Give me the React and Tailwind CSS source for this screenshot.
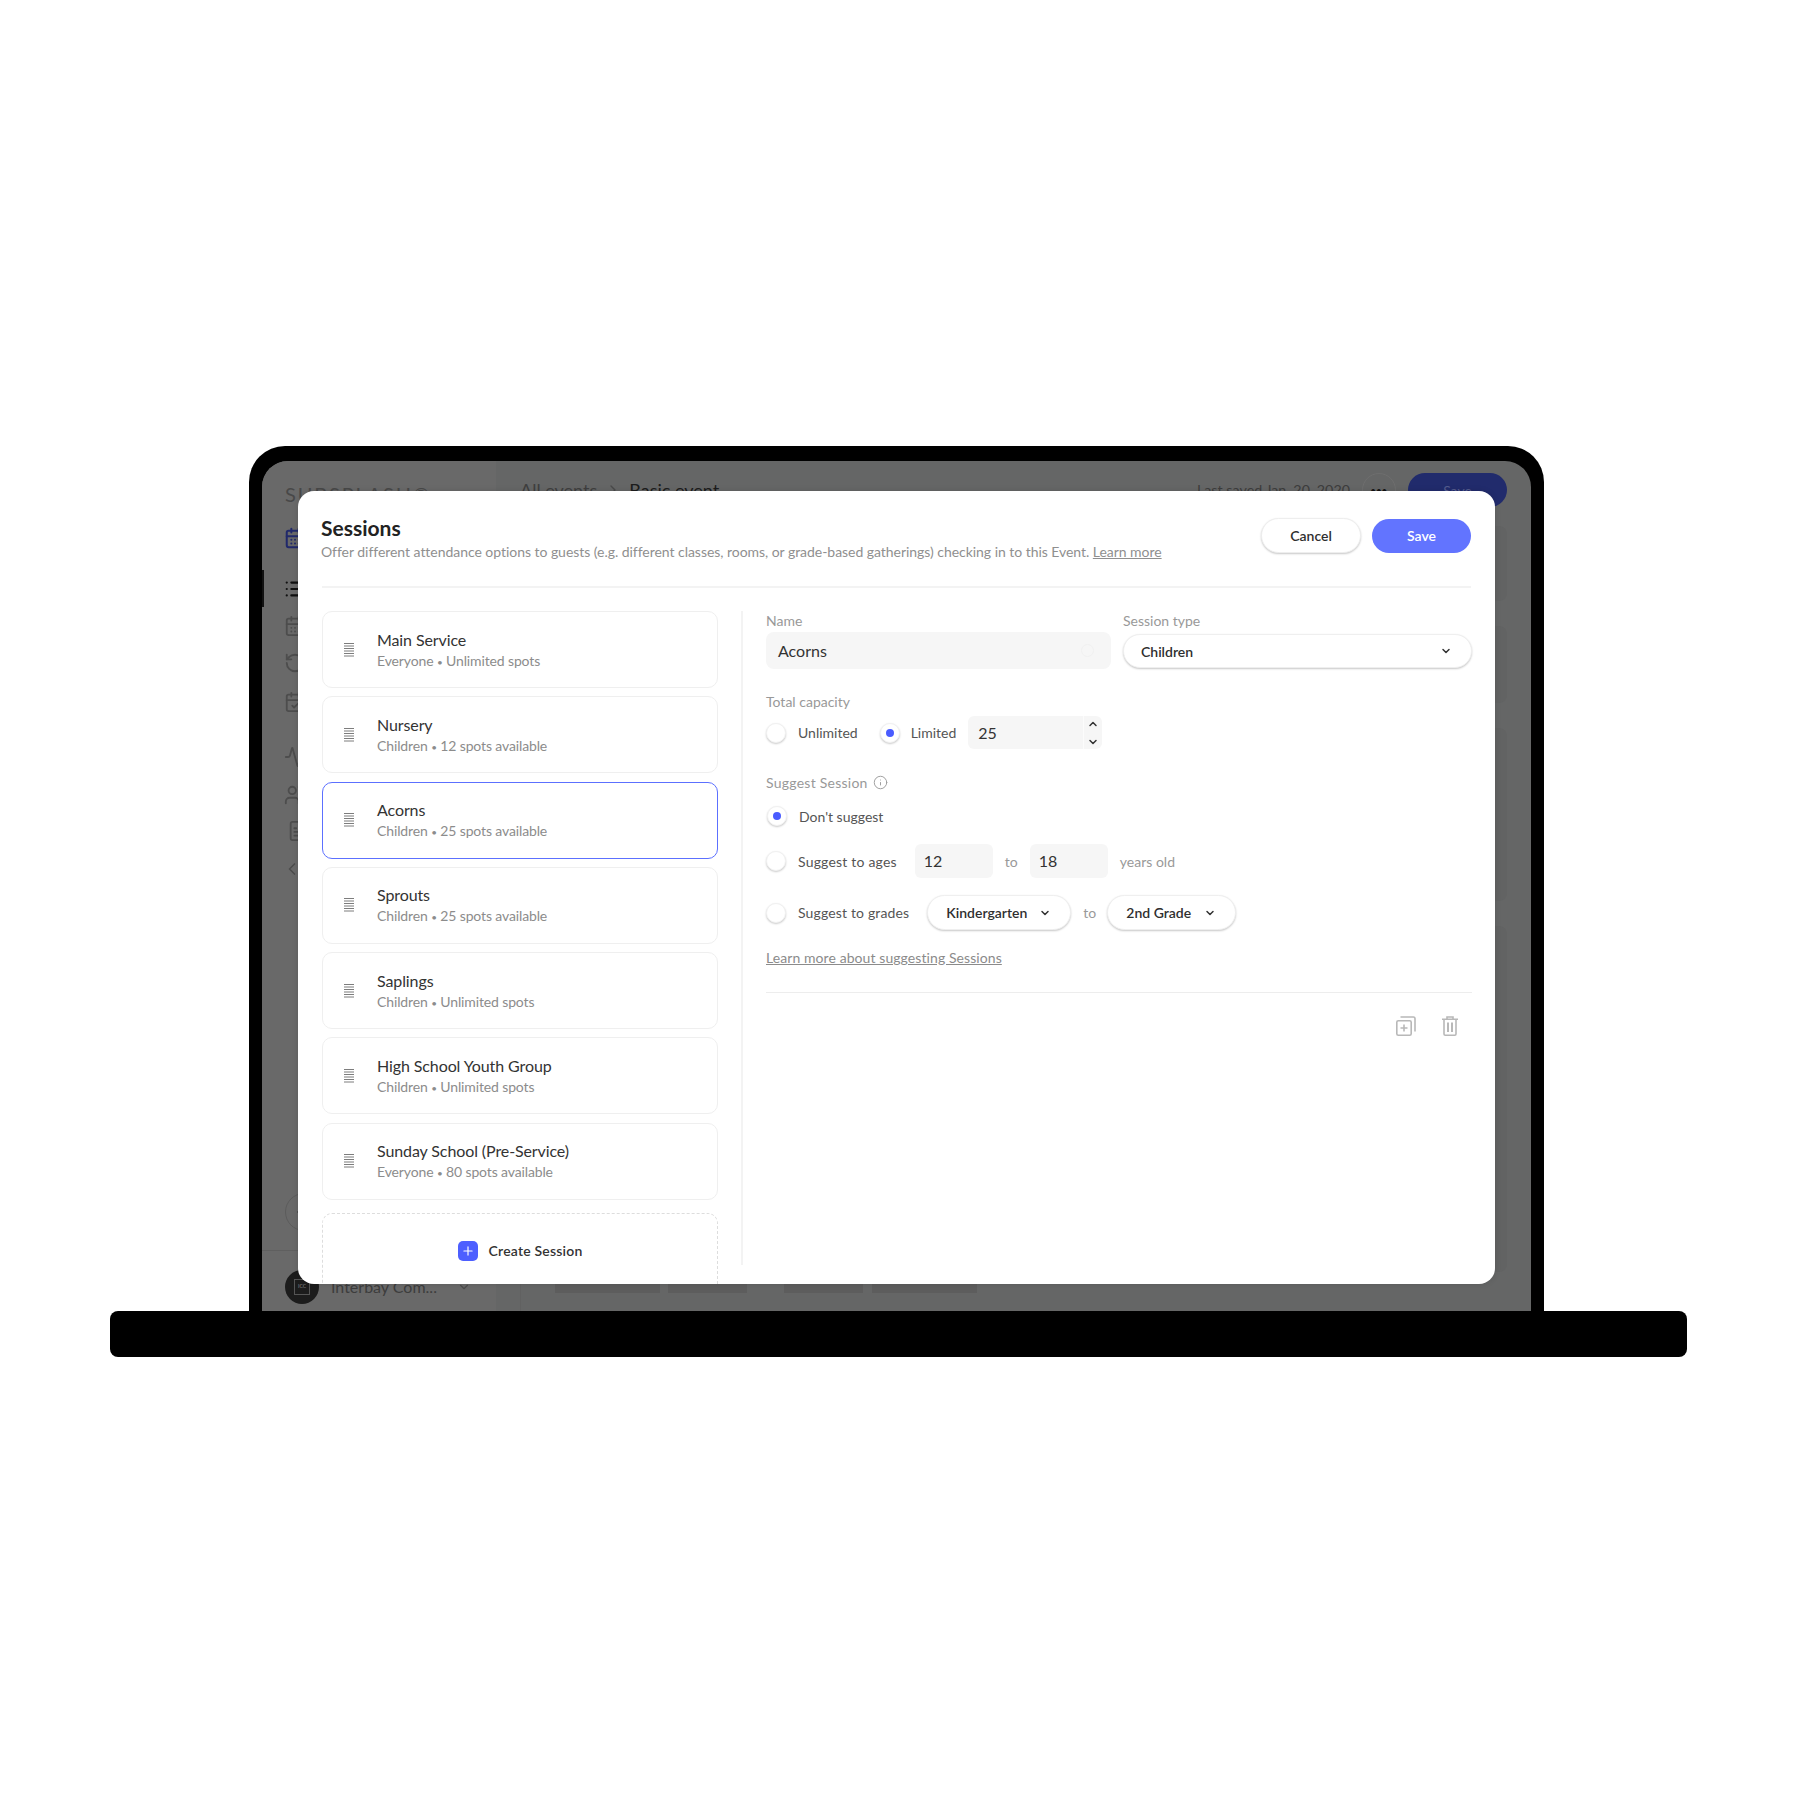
import React from "react";
import { CalendarDays, List, RotateCcw, CalendarCheck, Activity, Users, FileText, ChevronLeft, ChevronDown, ChevronUp, Plus, Info } from "lucide-react";

const sessions = [
  ["Main Service", "Everyone", "Unlimited spots"],
  ["Nursery", "Children", "12 spots available"],
  ["Acorns", "Children", "25 spots available", true],
  ["Sprouts", "Children", "25 spots available"],
  ["Saplings", "Children", "Unlimited spots"],
  ["High School Youth Group", "Children", "Unlimited spots"],
  ["Sunday School (Pre-Service)", "Everyone", "80 spots available"],
];

function Handle() {
  return (
    <svg width="10" height="14" viewBox="0 0 10 14" className="shrink-0" stroke="#7d7d7d" strokeWidth="1">
      <path d="M0 .5h10M0 3h10M0 5.5h10M0 8h10M0 10.500h10M0 13h10" />
    </svg>
  );
}

function Radio({ on }) {
  return (
    <span className="flex h-5 w-5 shrink-0 items-center justify-center rounded-full border border-[#f1f1f1] bg-white shadow-[0_1px_2px_rgba(0,0,0,0.22)]">
      {on && <span className="h-2 w-2 rounded-full bg-[#4a5cff]" />}
    </span>
  );
}

function Pill({ className, label }) {
  return (
    <div className={`flex items-center justify-between rounded-full border border-[#efefef] bg-white shadow-[0_1px_2px_rgba(0,0,0,0.22)] ${className}`}>
      <span className="text-[14px] font-semibold text-[#2f2f2f]">{label}</span>
      <ChevronDown size={12} strokeWidth={3} color="#333" />
    </div>
  );
}

function Background() {
  return (
    <div className="flex h-full w-full bg-[#656666] text-[#444]">
      <div className="flex h-full w-[234px] shrink-0 flex-col bg-[#696969]">
        <div className="ml-[23px] mt-[21px] text-[20px] leading-6 tracking-[1.85px] text-[#484848]">SUBSPLASH®</div>
        <div className="relative mt-[11px] flex flex-col">
          <CalendarDays size={22} strokeWidth={2.2} color="#21296b" className="ml-[22px] mt-[10px]" />
          <div className="mt-[21px] flex items-center">
            <span className="h-[37px] w-[2px] bg-[#111]" />
            <List size={22} strokeWidth={2.4} color="#111" className="ml-[20px]" />
          </div>
          <CalendarDays size={22} strokeWidth={2} color="#4d4d4d" className="ml-[22px] mt-[8px]" />
          <RotateCcw size={22} strokeWidth={2} color="#4d4d4d" className="ml-[22px] mt-[15px]" />
          <CalendarCheck size={22} strokeWidth={2} color="#4d4d4d" className="ml-[22px] mt-[17px]" />
          <Activity size={22} strokeWidth={2} color="#4d4d4d" className="ml-[22px] mt-[33px]" />
          <Users size={22} strokeWidth={2} color="#4d4d4d" className="ml-[22px] mt-[16px]" />
          <FileText size={22} strokeWidth={2} color="#4d4d4d" className="ml-[25px] mt-[14px]" />
          <ChevronLeft size={20} strokeWidth={2} color="#4d4d4d" className="ml-[20px] mt-[17px]" />
        </div>
        <div className="mt-auto">
          <div className="ml-[23px] flex h-[38px] w-[38px] items-center justify-center rounded-full border border-[#5c5c5c] text-[#222]">
            <Plus size={20} strokeWidth={2} />
          </div>
          <div className="mt-[19px] h-px bg-[#5f5f5f]" />
          <div className="flex h-[60px] items-start pl-[23px] pt-[19px]">
            <div className="flex h-[34px] w-[34px] shrink-0 items-center justify-center rounded-full bg-[#1c1c1c]">
              <span className="flex h-4 w-4 items-center justify-center border border-[#555] text-[5px] text-[#888]">ICC</span>
            </div>
            <span className="ml-[12px] text-[16px] leading-[34px] text-[#3d3d3d]">Interbay Com...</span>
            <ChevronDown size={14} color="#4d4d4d" className="ml-[20px] mt-[10px]" />
          </div>
        </div>
      </div>
      <div className="flex min-w-0 flex-1 flex-col">
        <div className="flex h-[65px] shrink-0 items-start pt-[12px] pl-[24px] pr-[24px]">
          <span className="mt-[5px] text-[18px] leading-6 text-[#3f3f3f]">All events</span>
          <ChevronLeft size={16} color="#4a4a4a" className="mx-[8px] mt-[9px] rotate-180" />
          <span className="mt-[5px] text-[18px] leading-6 text-[#1c1c1c]">Basic event</span>
          <span className="ml-auto mt-[5px] text-[14.300px] leading-6 text-[#3d3d3d]">Last saved Jan. 20, 2020</span>
          <span className="ml-[12px] flex h-[34px] w-[34px] items-center justify-center rounded-full border border-[#6e6e6e] text-[#111]">
            <span className="text-[9px] font-bold leading-none tracking-[0.5px]">•••</span>
          </span>
          <span className="ml-[12px] flex h-[34px] w-[99px] items-center justify-center rounded-full bg-[#212b6c] text-[14px] text-[#555c8e]">Save</span>
        </div>
        <div className="flex min-h-0 flex-1 pr-[24px]">
          <div className="ml-[24px] mr-[20px] flex min-w-0 flex-1 flex-col justify-end border-l border-[#616161] pb-[18px] pl-[34px]">
            <div className="flex">
              <span className="h-[9px] w-[105px] bg-[#5d5d5d]" />
              <span className="ml-[8px] h-[9px] w-[79px] bg-[#5d5d5d]" />
              <span className="ml-[37px] h-[9px] w-[79px] bg-[#5d5d5d]" />
              <span className="ml-[9px] h-[9px] w-[105px] bg-[#5d5d5d]" />
            </div>
          </div>
          <div className="flex w-[307px] shrink-0 flex-col gap-[25px]">
            <span className="h-[75px] rounded-lg bg-[#626363]" />
            <span className="h-[77px] rounded-lg bg-[#626363]" />
            <span className="h-[173px] rounded-lg bg-[#626363]" />
            <span className="h-[346px] rounded-lg bg-[#626363]" />
          </div>
        </div>
      </div>
    </div>
  );
}

function Modal() {
  return (
    <div className="absolute left-[36px] top-[30px] flex h-[793px] w-[1197px] flex-col overflow-hidden rounded-[16px] bg-white px-6 text-[#333] shadow-[0_0_6px_rgba(0,0,0,0.12)]">
      <div className="flex h-[97px] shrink-0 items-start justify-between border-b-2 border-[#f3f3f3] pt-[25px]">
        <div className="-ml-px">
          <h1 className="text-[21px] font-bold leading-[24px] text-[#222]">Sessions</h1>
          <p className="mt-[3px] text-[14px] leading-[18px] tracking-[-0.04px] text-[#8f8f8f]">
            Offer different attendance options to guests (e.g. different classes, rooms, or grade-based gatherings) checking in to this Event. <span className="underline">Learn more</span>
          </p>
        </div>
        <div className="mt-[2px] flex items-center gap-[11px]">
          <button className="h-[35px] w-[100px] rounded-full border border-[#eeeeee] bg-white text-[14px] font-semibold text-[#2f2f2f] shadow-[0_1px_2px_rgba(0,0,0,0.22)]">Cancel</button>
          <button className="h-[34px] w-[99px] rounded-full bg-[#6274ff] text-[14px] font-semibold text-white">Save</button>
        </div>
      </div>
      <div className="mt-[23px] flex min-h-0 flex-1 items-start">
        <div className="flex w-[396px] shrink-0 flex-col gap-[8.300px]">
          {sessions.map(([title, who, spots, active]) => (
            <div key={title} className={`flex h-[77px] shrink-0 items-center rounded-[10px] border bg-white pl-[21px] ${active ? "border-[#5c70ff]" : "border-[#efefef]"}`}>
              <Handle />
              <div className="ml-[23px] pt-px">
                <div className="text-[16px] leading-[22px] tracking-[-0.1px] text-[#333]">{title}</div>
                <div className="text-[14px] leading-[20px] tracking-[-0.13px] text-[#8c8c8c]">
                  {who} <span className="text-[10px]">•</span> {spots}
                </div>
              </div>
            </div>
          ))}
          <div className="mt-[5px] flex h-[90px] shrink-0 items-start justify-center rounded-[10px] border border-dashed border-[#dddddd] pt-[27px]">
            <span className="flex h-5 w-5 items-center justify-center rounded-[5px] bg-[#4d5fff]">
              <Plus size={14} strokeWidth={2} color="#fff" />
            </span>
            <span className="ml-[11px] text-[14px] font-semibold leading-5 tracking-[0.2px] text-[#333]">Create Session</span>
          </div>
        </div>
        <div className="ml-[23px] h-[654px] w-[2px] shrink-0 bg-[#f3f3f3]" />
        <div className="ml-[23px] flex w-[706px] shrink-0 flex-col pt-px">
          <div className="flex gap-[12px]">
            <div className="w-[345px]">
              <div className="text-[14px] leading-[18px] text-[#999]">Name</div>
              <div className="mt-[2px] flex h-[37px] items-center justify-between rounded-[8px] bg-[#f6f6f6] pl-[12px] pr-[17px] text-[16px] text-[#333]">
                Acorns
                <span className="h-[13px] w-[13px] rounded-full border border-[#f1f1f1]" />
              </div>
            </div>
            <div className="flex-1">
              <div className="text-[14px] leading-[18px] text-[#999]">Session type</div>
              <Pill className="mt-[4px] h-[34px] pl-[17px] pr-[19px]" label="Children" />
            </div>
          </div>

          <div className="mt-[24px] text-[14px] leading-[18px] text-[#999]">Total capacity</div>
          <div className="mt-[5px] flex h-[33px] items-center">
            <Radio />
            <span className="ml-[12px] text-[14px] text-[#555]">Unlimited</span>
            <span className="ml-[22px]"><Radio on /></span>
            <span className="ml-[11px] text-[14px] text-[#555]">Limited</span>
            <div className="ml-[12px] flex h-[33px] w-[134px] items-center justify-between rounded-[6px] bg-[#f6f6f6] pl-[10px] text-[16px] text-[#333]">
              <span>25</span>
              <span className="flex h-full w-[19px] flex-col items-center justify-center gap-[6px] border-l border-[#fcfcfc]">
                <ChevronUp size={12} strokeWidth={3} color="#333" />
                <ChevronDown size={12} strokeWidth={3} color="#333" />
              </span>
            </div>
          </div>

          <div className="mt-[24px] flex h-[18px] items-center text-[14px] tracking-[0.25px] text-[#999]">
            Suggest Session
            <Info size={15} strokeWidth={1.5} color="#9a9a9a" className="ml-[5px]" />
          </div>
          <div className="mt-[13px] flex h-[24px] items-center pl-px">
            <Radio on />
            <span className="ml-[12px] text-[14px] text-[#555]">Don't suggest</span>
          </div>
          <div className="mt-[16px] flex h-[34px] items-center">
            <Radio />
            <span className="ml-[12px] text-[14px] tracking-[0.2px] text-[#555]">Suggest to ages</span>
            <span className="ml-[18px] flex h-[34px] w-[78px] items-center rounded-[6px] bg-[#f6f6f6] pl-[9px] text-[16px] text-[#333]">12</span>
            <span className="ml-[12px] w-[13px] text-[14px] text-[#999]">to</span>
            <span className="ml-[12px] flex h-[34px] w-[78px] items-center rounded-[6px] bg-[#f6f6f6] pl-[9px] text-[16px] text-[#333]">18</span>
            <span className="ml-[12px] text-[14px] text-[#999]">years old</span>
          </div>
          <div className="mt-[17px] flex h-[35px] items-center">
            <Radio />
            <span className="ml-[12px] text-[14px] tracking-[0.15px] text-[#555]">Suggest to grades</span>
            <Pill className="ml-[18px] h-[35px] w-[144px] pl-[18px] pr-[19px]" label="Kindergarten" />
            <span className="ml-[12px] w-[12px] text-[14px] text-[#999]">to</span>
            <Pill className="ml-[12px] h-[35px] w-[129px] pl-[18px] pr-[19px]" label="2nd Grade" />
          </div>
          <div className="mt-[19px] text-[14px] leading-[18px] tracking-[0.08px] text-[#8b8b8b] underline">Learn more about suggesting Sessions</div>
          <div className="mt-[25px] h-px bg-[#ededed]" />
          <div className="mt-[23px] flex justify-end gap-[26px] pr-[14px]">
            <svg width="20" height="20" viewBox="0 0 20 20" fill="none" stroke="#b8b8b8" strokeWidth="1.6">
              <rect x="0.800" y="4.800" width="14.400" height="14.400" rx="1.500" />
              <path d="M4.500 1h13a1.500 1.500 0 0 1 1.500 1.500V15.500M8 8.500v7M4.500 12h7" />
            </svg>
            <svg width="16" height="20" viewBox="0 0 16 20" fill="none" stroke="#b8b8b8" strokeWidth="1.6">
              <path d="M0 3.200h16M5 3V1h6v2M2 3.200V18a1.200 1.200 0 0 0 1.200 1.200h9.600A1.200 1.200 0 0 0 14 18V3.200" />
              <path d="M6 6.500v9.500M10 6.500v9.500" strokeWidth="2" />
            </svg>
          </div>
        </div>
      </div>
    </div>
  );
}

export default function App() {
  return (
    <div className="h-[1798px] w-[1798px] overflow-hidden bg-white pt-[446px] [font-family:Lato,'Noto_Sans',sans-serif]">
      <div className="ml-[249px] h-[865px] w-[1295px] rounded-t-[36px] bg-black px-[13px] pt-[15px]">
        <div className="relative h-[850px] w-[1269px] overflow-hidden rounded-t-[26px]">
          <Background />
          <Modal />
        </div>
      </div>
      <div className="ml-[110px] h-[46px] w-[1577px] rounded-[8px] bg-black" />
    </div>
  );
}
